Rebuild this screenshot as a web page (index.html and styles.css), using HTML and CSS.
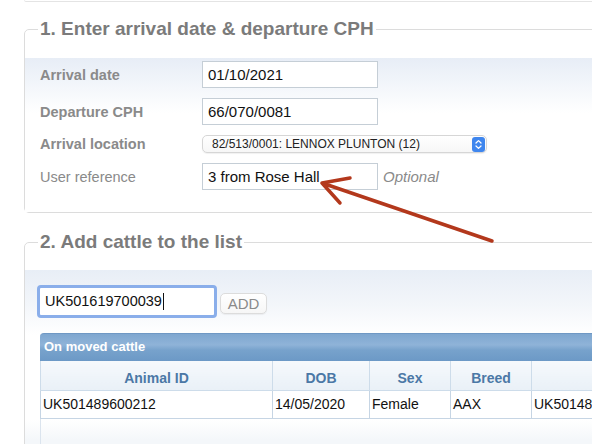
FILE: index.html
```html
<!DOCTYPE html>
<html lang="en">
<head>
<meta charset="utf-8">
<title>Movements</title>
<link rel="stylesheet" href="styles.css">
</head>
<body>
<div class="page">
  <div class="prev"></div>

  <fieldset class="box box1">
    <legend>1. Enter arrival date &amp; departure CPH</legend>
    <div class="band band1">
      <div class="row">
        <span class="lbl strong">Arrival date</span>
        <div class="field">01/10/2021</div>
      </div>
      <div class="row">
        <span class="lbl strong">Departure CPH</span>
        <div class="field">66/070/0081</div>
      </div>
      <div class="row">
        <span class="lbl strong">Arrival location</span>
        <div class="select">
          <span class="select-text">82/513/0001: LENNOX PLUNTON (12)</span>
          <span class="stepper">
            <svg width="13" height="15" viewBox="0 0 13 15">
              <rect x="0" y="0" width="13" height="15" rx="3" fill="#3f86ee"/>
              <path d="M4 6 L6.5 3.6 L9 6 M4 9 L6.5 11.4 L9 9" fill="none" stroke="#fff" stroke-width="1.3" stroke-linecap="round" stroke-linejoin="round"/>
            </svg>
          </span>
        </div>
      </div>
      <div class="row">
        <span class="lbl">User reference</span>
        <div class="field">3 from Rose Hall</div>
        <span class="hint">Optional</span>
      </div>
    </div>
  </fieldset>

  <fieldset class="box box2">
    <legend>2. Add cattle to the list</legend>
    <div class="band band2">
      <div class="add-row">
        <div class="field-focus">UK501619700039<span class="caret"></span></div>
        <button class="add-btn">ADD</button>
      </div>
      <div class="grid">
        <div class="grid-title">On moved cattle</div>
        <table class="cattle">
          <colgroup>
            <col class="c1"><col class="c2"><col class="c3"><col class="c4"><col class="c5">
          </colgroup>
          <thead>
            <tr><th>Animal ID</th><th>DOB</th><th>Sex</th><th>Breed</th><th></th></tr>
          </thead>
          <tbody>
            <tr><td>UK501489600212</td><td>14/05/2020</td><td>Female</td><td>AAX</td><td>UK50148</td></tr>
          </tbody>
        </table>
        <div class="grid-rest"></div>
      </div>
    </div>
  </fieldset>

  <svg class="arrow" width="592" height="444" viewBox="0 0 592 444">
    <path d="M492 241 L322 183 M322 183 L350 178 M322 183 L340 203" fill="none" stroke="#b3381c" stroke-width="3.5" stroke-linecap="round" stroke-linejoin="round"/>
  </svg>
</div>
</body>
</html>
```

FILE: styles.css
```css
html, body {
  margin: 0;
  padding: 0;
  overflow: hidden;
  background: #fff;
}

body {
  font-family: "Liberation Sans", Arial, Helvetica, sans-serif;
  color: #111;
}

.page {
  position: relative;
  width: 592px;
  height: 444px;
  overflow: hidden;
}

.prev {
  height: 1px;
  margin-left: 24px;
  width: 640px;
  border-bottom: 1px solid #e4e4e4;
  border-left: 1px solid #ececec;
  border-bottom-left-radius: 4px;
}

.box {
  margin: 0 0 0 24px;
  padding: 0;
  border: 1px solid #dcdcdc;
  border-radius: 5px;
  width: 640px;
  min-width: 0;
  box-sizing: border-box;
}

.box legend {
  margin-left: 13px;
  padding: 0 2px;
  font-size: 19px;
  line-height: 22px;
  font-weight: bold;
  color: #7b7b7b;
}

.box1 {
  margin-top: 16px;
}

.box2 {
  margin-top: 18px;
  height: 240px;
}

.band {
  background: linear-gradient(180deg, #e7edf6 0%, #f4f7fb 30px, #ffffff 55px);
}

.band1 {
  margin-top: 18px;
  padding: 3px 0 22px 15px;
  display: flex;
  flex-direction: column;
  gap: 10px;
}

.row {
  display: flex;
  align-items: center;
}

.lbl {
  width: 162px;
  font-size: 14.5px;
  color: #8a8a8a;
}

.lbl.strong {
  font-weight: bold;
}

.field {
  width: 176px;
  height: 27px;
  box-sizing: border-box;
  border: 1px solid #c5ced6;
  background: #fff;
  font-size: 15px;
  line-height: 25px;
  padding-left: 5px;
  color: #111;
}

.hint {
  margin-left: 5px;
  font-size: 15px;
  font-style: italic;
  color: #8a8a8a;
}

.select {
  width: 285px;
  height: 18px;
  box-sizing: border-box;
  border: 1px solid #d6d6d6;
  border-radius: 5px;
  background: linear-gradient(#ffffff, #f7f7f7);
  box-shadow: 0 1px 1px rgba(0,0,0,0.06);
  display: flex;
  align-items: center;
  justify-content: space-between;
  padding: 0 1px 0 9px;
}

.select-text {
  font-size: 12px;
  color: #222;
  white-space: nowrap;
}

.stepper {
  display: flex;
}

.band2 {
  margin-top: 17px;
  padding: 15px 0 0 12px;
  height: 200px;
  background: linear-gradient(180deg, #e8eef6 0%, #f3f6fa 35px, #ffffff 65px, #ffffff 150px, #f4f7fa 170px);
}

.add-row {
  display: flex;
  align-items: flex-start;
}

.field-focus {
  width: 180px;
  height: 33px;
  box-sizing: border-box;
  border: 3px solid #8aaeea;
  border-radius: 4px;
  background: #fff;
  font-size: 14.5px;
  line-height: 27px;
  padding-left: 5px;
  color: #111;
  display: flex;
  align-items: center;
}

.caret {
  display: inline-block;
  width: 1px;
  height: 17px;
  background: #111;
  margin-left: 1px;
}

.add-btn {
  margin: 8px 0 0 3px;
  width: 47px;
  height: 21px;
  box-sizing: border-box;
  border: 1px solid #dcdcdc;
  border-radius: 5px;
  background: linear-gradient(#ffffff, #f6f6f6);
  box-shadow: 0 1px 1px rgba(0,0,0,0.05);
  font-family: "Liberation Sans", Arial, sans-serif;
  font-size: 15px;
  color: #8a8a8a;
  padding: 0;
  line-height: 19px;
}

.grid {
  margin: 15px 0 0 3px;
  width: 620px;
}

.grid-title {
  height: 28px;
  box-sizing: border-box;
  border-top: 1px solid #6f98c4;
  border-radius: 4px 4px 0 0;
  background: linear-gradient(180deg, #7fa7d0 0%, #8fb3d8 40%, #77a2cc 60%, #6c99c6 100%);
  color: #fff;
  font-weight: bold;
  font-size: 13px;
  line-height: 26px;
  padding-left: 4px;
}

.cattle {
  border-collapse: collapse;
  table-layout: fixed;
  width: 620px;
}

.cattle .c1 { width: 232px; }
.cattle .c2 { width: 97px; }
.cattle .c3 { width: 81px; }
.cattle .c4 { width: 81px; }
.cattle .c5 { width: 129px; }

.cattle th {
  height: 29px;
  box-sizing: border-box;
  border: 1px solid #cddcea;
  border-top: none;
  background: linear-gradient(180deg, #f6f9fc, #e9f0f7);
  color: #4b78a6;
  font-size: 14px;
  font-weight: bold;
  text-align: center;
  padding: 5px 0 0 0;
}

.cattle td {
  height: 28px;
  box-sizing: border-box;
  border: 1px solid #c6d5e4;
  background: #fff;
  font-size: 14px;
  color: #111;
  padding: 0 2px 0 2px;
  white-space: nowrap;
  overflow: hidden;
}

.grid-rest {
  height: 40px;
  border-left: 1px solid #dbe4ee;
}

.arrow {
  position: absolute;
  left: 0;
  top: 0;
  pointer-events: none;
}
```
